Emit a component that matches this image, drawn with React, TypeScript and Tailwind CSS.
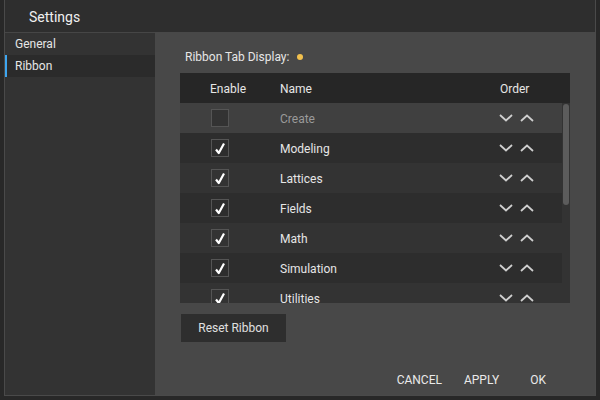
import { useState } from "react";

type Tab = { name: string; enabled: boolean };

const initialTabs: Tab[] = [
  { name: "Create", enabled: false },
  { name: "Modeling", enabled: true },
  { name: "Lattices", enabled: true },
  { name: "Fields", enabled: true },
  { name: "Math", enabled: true },
  { name: "Simulation", enabled: true },
  { name: "Utilities", enabled: true },
];

function Chevron({ up }: { up?: boolean }) {
  return (
    <svg width="14" height="8" viewBox="0 0 14 8" className="text-[#cfcfcf]">
      <path
        d={up ? "M1 7 L7 1.5 L13 7" : "M1 1 L7 6.5 L13 1"}
        fill="none"
        stroke="currentColor"
        strokeWidth="1.8"
      />
    </svg>
  );
}

function Checkbox({ checked }: { checked: boolean }) {
  return (
    <div
      className={`w-[18px] h-[18px] border border-[#555] flex items-center justify-center ${
        checked ? "" : "bg-[#333]"
      }`}
    >
      {checked && (
        <svg width="12" height="13" viewBox="0 0 12 13">
          <path
            d="M2 7.5 L4.8 11 L10 1.5"
            fill="none"
            stroke="#fff"
            strokeWidth="2.2"
            strokeLinejoin="round"
          />
        </svg>
      )}
    </div>
  );
}

export default function App() {
  const [tabs] = useState(initialTabs);
  const [section, setSection] = useState("Ribbon");

  return (
    <div
      className="w-[600px] h-[400px] bg-[#282828] text-[12px] text-[#e6e6e6]"
      style={{ fontFamily: "Roboto, 'Liberation Sans', sans-serif" }}
    >
      <div className="ml-[4px] w-[592px] h-[396px] border-x border-b border-[#4a4a4a] flex flex-col bg-[#2e2e2e]">
        {/* title bar */}
        <div className="h-[32px] flex items-center pl-[24px] pt-[2px] text-[14px] text-[#f0f0f0]">
          Settings
        </div>

        <div className="flex flex-1 min-h-0">
          {/* sidebar */}
          <div className="w-[150px] bg-[#333] border-t border-[#464646] flex flex-col">
            {["General", "Ribbon"].map((s) => (
              <button
                key={s}
                onClick={() => setSection(s)}
                className={`h-[22px] flex items-center pl-[8px] text-left border-l-2 ${
                  section === s
                    ? "bg-[#2b2b2b] border-[#3ea6f0]"
                    : "border-transparent"
                }`}
              >
                {s}
              </button>
            ))}
          </div>

          {/* main panel */}
          <div className="flex-1 bg-[#484848] flex flex-col pl-[25px] pt-[17px]">
            <div className="flex items-center pl-[5px] h-[16px]">
              <span>Ribbon Tab Display:</span>
              <span className="ml-[8px] w-[6px] h-[6px] rounded-full bg-[#f2c14e]" />
            </div>

            <div className="mt-[8px] w-[390px] bg-[#333]">
              <div className="h-[30px] bg-[#262626] flex items-center pt-[1px]">
                <div className="w-[100px] pl-[30px]">Enable</div>
                <div className="flex-1">Name</div>
                <div className="w-[70px]">Order</div>
              </div>
              <div className="h-[200px] overflow-hidden flex">
                <div className="w-[382px] flex flex-col">
                  {tabs.map((t, i) => (
                    <div
                      key={t.name}
                      className={`h-[30px] shrink-0 flex items-center ${
                        i === 0
                          ? "bg-[#404040]"
                          : i % 2 === 1
                          ? "bg-[#2d2d2d]"
                          : "bg-[#333]"
                      }`}
                    >
                      <div className="w-[100px] pl-[31px]">
                        <Checkbox checked={t.enabled} />
                      </div>
                      <div
                        className={`flex-1 pt-[2px] ${
                          t.enabled ? "text-[#e6e6e6]" : "text-[#9a9a9a]"
                        }`}
                      >
                        {t.name}
                      </div>
                      <div className="w-[63px] flex items-center gap-[7px]">
                        <Chevron />
                        <Chevron up />
                      </div>
                    </div>
                  ))}
                </div>
                <div className="w-[8px] pl-[1px] pt-[1px]">
                  <div className="w-[6px] h-[101px] rounded-full bg-[#5c5c5c]" />
                </div>
              </div>
            </div>

            <button className="mt-[11px] ml-[1px] w-[105px] h-[28px] bg-[#2e2e2e] text-[#e0e0e0]">
              Reset Ribbon
            </button>

            <div className="mt-auto mb-[7px] h-[16px] flex items-center justify-end pr-[49px] text-[#eaeaea]">
              <button>CANCEL</button>
              <button className="ml-[22px]">APPLY</button>
              <button className="ml-[31px]">OK</button>
            </div>
          </div>
        </div>
      </div>
    </div>
  );
}
